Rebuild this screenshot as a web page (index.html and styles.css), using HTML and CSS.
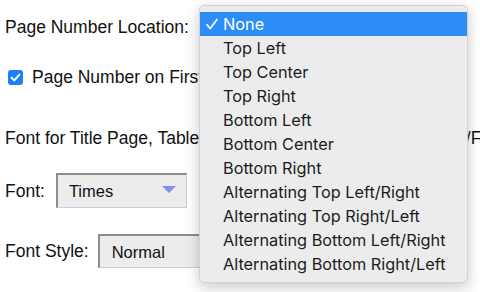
FILE: index.html
```html
<!DOCTYPE html>
<html lang="en">
<head>
    <meta charset="UTF-8">
    <title>Page Setup</title>
    <link rel="stylesheet" href="styles.css">
</head>
<body>
    <div class="row first">
        <label>Page Number Location:</label>
    </div>

    <div class="row check-row">
        <span class="checkbox">
            <svg width="15" height="15" viewBox="0 0 15 15"><path d="M3.6 7.8 L6.3 10.4 L11.4 4.6" fill="none" stroke="#fff" stroke-width="2" stroke-linecap="round" stroke-linejoin="round"/></svg>
        </span>
        <label>Page Number on First Page</label>
    </div>

    <div class="row section">
        <label>Font for Title Page, Table of Contents, Indexes, and Header/Footer:</label>
    </div>

    <div class="row field font-row">
        <label>Font:</label>
        <div class="select font-select">
            <span>Times</span>
            <span class="arrow"></span>
        </div>
    </div>

    <div class="row field style-row">
        <label>Font Style:</label>
        <div class="select style-select">
            <span>Normal</span>
        </div>
    </div>

    <ul class="menu">
        <li class="selected">
            <span class="tick"><svg width="12" height="12" viewBox="0 0 12 12"><path d="M1 6.6 L4.3 10.6 L11 1.4" fill="none" stroke="#fff" stroke-width="1.7" stroke-linecap="round" stroke-linejoin="round"/></svg></span>None
        </li>
        <li><span class="tick"></span>Top Left</li>
        <li><span class="tick"></span>Top Center</li>
        <li><span class="tick"></span>Top Right</li>
        <li><span class="tick"></span>Bottom Left</li>
        <li><span class="tick"></span>Bottom Center</li>
        <li><span class="tick"></span>Bottom Right</li>
        <li><span class="tick"></span>Alternating Top Left/Right</li>
        <li><span class="tick"></span>Alternating Top Right/Left</li>
        <li><span class="tick"></span>Alternating Bottom Left/Right</li>
        <li><span class="tick"></span>Alternating Bottom Right/Left</li>
    </ul>
</body>
</html>
```

FILE: styles.css
```css
body {
    margin: 0;
    padding: 0 0 0 5px;
    background-color: #fff;
    color: #111;
    font-family: "Liberation Sans", Arial, sans-serif;
    font-size: 17.5px;
    line-height: 20px;
    overflow: hidden;
    width: 480px;
    height: 292px;
}
.row {
    display: flex;
    align-items: center;
    white-space: nowrap;
}
.first {
    padding-top: 17px;
}
.check-row {
    margin-top: 30px;
}
.checkbox {
    width: 15px;
    height: 15px;
    margin-left: 3px;
    margin-right: 9px;
    background-color: #1b80f6;
    border-radius: 3px;
    display: flex;
}
.section {
    margin-top: 41px;
}
.font-row {
    margin-top: 25px;
}
.style-row {
    margin-top: 26px;
}
.select {
    display: flex;
    align-items: center;
    justify-content: space-between;
    box-sizing: border-box;
    background-color: #ececec;
    border-top: 2px solid #8c8c8c;
    border-left: 2px solid #8c8c8c;
    border-right: 1px solid #cfcfcf;
    border-bottom: 1px solid #cfcfcf;
    font-size: 16.5px;
    color: #111;
}
.font-select {
    width: 131px;
    height: 35px;
    margin-left: 11px;
    padding: 0 10px 0 11px;
}
.style-select {
    width: 140px;
    height: 34px;
    margin-left: 9px;
    padding: 0 10px 0 12px;
}
.arrow {
    width: 0;
    height: 0;
    border-left: 7px solid transparent;
    border-right: 7px solid transparent;
    border-top: 7px solid #7d90ef;
    margin-bottom: 3px;
}
.menu {
    position: absolute;
    left: 199px;
    top: 5px;
    width: 269px;
    box-sizing: border-box;
    margin: 0;
    padding: 6px 0;
    list-style: none;
    background-color: #ececec;
    border: 1px solid #d2d2d2;
    border-radius: 5px;
    box-shadow: 0 4px 14px rgba(0, 0, 0, 0.22);
    font-family: Inter, "Liberation Sans", sans-serif;
    font-size: 16.3px;
    color: #1c1c1c;
}
.menu li {
    height: 24px;
    line-height: 24px;
    padding-left: 6px;
    display: flex;
    align-items: center;
    white-space: nowrap;
}
.menu li.selected {
    background-color: #2c8df7;
    color: #fff;
}
.tick {
    width: 17px;
    flex-shrink: 0;
    display: flex;
    align-items: center;
}
```
